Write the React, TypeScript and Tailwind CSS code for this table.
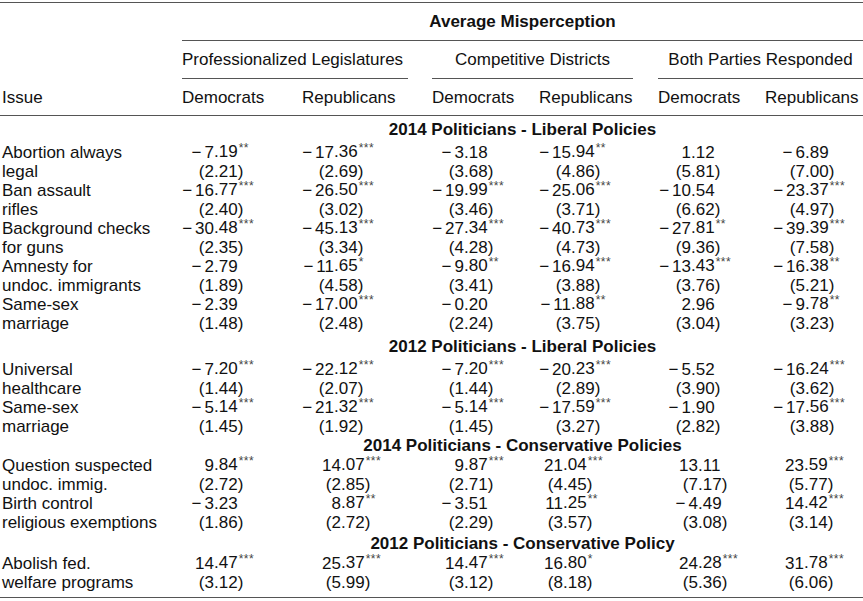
import React from 'react';

type Cell = [string, string]; // [coefficient, standard error]

interface IssueRow {
  label: [string, string];
  cells: Cell[];
}

interface Section {
  title: string;
  headCls: string;
  widths: string[];
  rows: IssueRow[];
}

// width of the part left of the decimal point, per data column
const upperWidths = ['w-[32px]', 'w-[42px]', 'w-[32px]', 'w-[44px]', 'w-[33px]', 'w-[51px]'];
const lowerWidths = ['w-[32px]', 'w-[49px]', 'w-[32px]', 'w-[36px]', 'w-[40px]', 'w-[50px]'];

const sections: Section[] = [
  {
    title: '2014 Politicians - Liberal Policies',
    headCls: 'h-[27px] pt-[4px]',
    widths: upperWidths,
    rows: [
      { label: ['Abortion always', 'legal'], cells: [['-7.19**', '2.21'], ['-17.36***', '2.69'], ['-3.18', '3.68'], ['-15.94**', '4.86'], ['1.12', '5.81'], ['-6.89', '7.00']] },
      { label: ['Ban assault', 'rifles'], cells: [['-16.77***', '2.40'], ['-26.50***', '3.02'], ['-19.99***', '3.46'], ['-25.06***', '3.71'], ['-10.54', '6.62'], ['-23.37***', '4.97']] },
      { label: ['Background checks', 'for guns'], cells: [['-30.48***', '2.35'], ['-45.13***', '3.34'], ['-27.34***', '4.28'], ['-40.73***', '4.73'], ['-27.81**', '9.36'], ['-39.39***', '7.58']] },
      { label: ['Amnesty for', 'undoc. immigrants'], cells: [['-2.79', '1.89'], ['-11.65*', '4.58'], ['-9.80**', '3.41'], ['-16.94***', '3.88'], ['-13.43***', '3.76'], ['-16.38**', '5.21']] },
      { label: ['Same-sex', 'marriage'], cells: [['-2.39', '1.48'], ['-17.00***', '2.48'], ['-0.20', '2.24'], ['-11.88**', '3.75'], ['2.96', '3.04'], ['-9.78**', '3.23']] },
    ],
  },
  {
    title: '2012 Politicians - Liberal Policies',
    headCls: 'h-[27px] pt-[4px]',
    widths: upperWidths,
    rows: [
      { label: ['Universal', 'healthcare'], cells: [['-7.20***', '1.44'], ['-22.12***', '2.07'], ['-7.20***', '1.44'], ['-20.23***', '2.89'], ['-5.52', '3.90'], ['-16.24***', '3.62']] },
      { label: ['Same-sex', 'marriage'], cells: [['-5.14***', '1.45'], ['-21.32***', '1.92'], ['-5.14***', '1.45'], ['-17.59***', '3.27'], ['-1.90', '2.82'], ['-17.56***', '3.88']] },
    ],
  },
  {
    title: '2014 Politicians - Conservative Policies',
    headCls: 'h-[20px]',
    widths: lowerWidths,
    rows: [
      { label: ['Question suspected', 'undoc. immig.'], cells: [['9.84***', '2.72'], ['14.07***', '2.85'], ['9.87***', '2.71'], ['21.04***', '4.45'], ['13.11', '7.17'], ['23.59***', '5.77']] },
      { label: ['Birth control', 'religious exemptions'], cells: [['-3.23', '1.86'], ['8.87**', '2.72'], ['-3.51', '2.29'], ['11.25**', '3.57'], ['-4.49', '3.08'], ['14.42***', '3.14']] },
    ],
  },
  {
    title: '2012 Politicians - Conservative Policy',
    headCls: 'h-[22px] pt-[2px]',
    widths: lowerWidths,
    rows: [
      { label: ['Abolish fed.', 'welfare programs'], cells: [['14.47***', '3.12'], ['25.37***', '5.99'], ['14.47***', '3.12'], ['16.80*', '8.18'], ['24.28***', '5.36'], ['31.78***', '6.06']] },
    ],
  },
];

const dataCols = ['col-start-2', 'col-start-3', 'col-start-5', 'col-start-6', 'col-start-8', 'col-start-9'];

const grid = 'grid grid-cols-[182px_110px_116px_24px_95px_106px_25px_96px_109px]';

const Num = ({ value, paren, col, width }: { value: string; paren?: boolean; col: number; width: string }) => {
  const m = value.match(/^(-?)(\d+)\.(\d+)(\**)$/);
  if (!m) return null;
  const [, neg, whole, frac, stars] = m;
  return (
    <div className={`${dataCols[col]} flex h-[19px] items-center whitespace-nowrap`}>
      <span className={`${width} shrink-0 text-right`}>
        {neg && <span className="mr-[3px]">{'\u2212'}</span>}
        {paren && '('}
        {whole}
      </span>
      <span>
        .{frac}
        {paren && ')'}
        {stars && <span className="relative -top-[5px] ml-px text-[12px] tracking-[0.5px] text-[#444]">{stars}</span>}
      </span>
    </div>
  );
};

const Rule = ({ className = '' }: { className?: string }) => <div className={`h-px bg-[#555] ${className}`} />;

export default function App() {
  return (
    <div className="w-[863px] h-[601px] bg-white text-[17px] leading-[19px] text-[#111] font-['Liberation_Sans',Arial,sans-serif]">
      <div className="h-[2px]" />
      <Rule />

      {/* header block */}
      <div className={grid}>
        <div className="col-start-2 col-end-10 h-[37px] flex items-center justify-center font-bold">Average Misperception</div>
        <Rule className="col-start-2 col-end-10" />
        <div className="col-start-2 col-end-4 h-[37px] flex items-center">Professionalized Legislatures</div>
        <div className="col-start-5 col-end-7 h-[37px] flex items-center justify-center">Competitive Districts</div>
        <div className="col-start-8 col-end-10 h-[37px] flex items-center justify-center">Both Parties Responded</div>
        <Rule className="col-start-2 col-end-4" />
        <Rule className="col-start-5 col-end-7" />
        <Rule className="col-start-8 col-end-10" />
        <div className="col-start-1 h-[36px] flex items-center pl-[2px]">Issue</div>
        <div className="col-start-2 h-[36px] flex items-center">Democrats</div>
        <div className="col-start-3 h-[36px] flex items-center pl-[10px]">Republicans</div>
        <div className="col-start-5 h-[36px] flex items-center">Democrats</div>
        <div className="col-start-6 h-[36px] flex items-center pl-[12px]">Republicans</div>
        <div className="col-start-8 h-[36px] flex items-center">Democrats</div>
        <div className="col-start-9 h-[36px] flex items-center pl-[11px]">Republicans</div>
      </div>
      <Rule />

      {/* body */}
      <div className="h-[476px]">
        {sections.map((s) => (
          <React.Fragment key={s.title}>
            <div className={`${grid} ${s.headCls}`}>
              <div className="col-start-2 col-end-10 text-center font-bold">{s.title}</div>
            </div>
            {s.rows.map((r) => (
              <div key={r.label[0] + s.title} className={grid}>
                <div className="col-start-1 h-[19px] pl-[2px] whitespace-nowrap">{r.label[0]}</div>
                {r.cells.map((c, i) => (
                  <Num key={i} value={c[0]} col={i} width={s.widths[i]} />
                ))}
                <div className="col-start-1 h-[19px] pl-[2px] whitespace-nowrap">{r.label[1]}</div>
                {r.cells.map((c, i) => (
                  <Num key={i} value={c[1]} paren col={i} width={s.widths[i]} />
                ))}
              </div>
            ))}
          </React.Fragment>
        ))}
      </div>
      <Rule className="mt-[5px]" />
    </div>
  );
}
